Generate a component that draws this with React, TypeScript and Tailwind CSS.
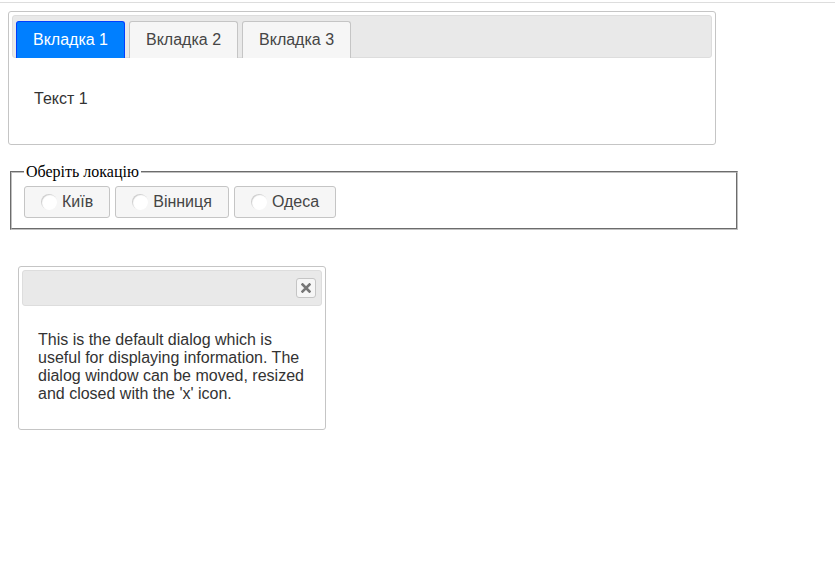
import { useState } from "react";

const tabs = ["Вкладка 1", "Вкладка 2", "Вкладка 3"];
const cities = ["Київ", "Вінниця", "Одеса"];

const App = () => {
  const [active, setActive] = useState(0);
  const [city, setCity] = useState<string | null>(null);

  return (
    <div className="min-h-screen bg-white font-['Liberation_Sans',Arial,sans-serif] text-[16px]">
      {/* thin rule at the very top */}
      <div className="mt-[2px] h-px bg-[#dddddd]"></div>

      {/* Tabs widget */}
      <div className="ml-[8px] mt-[8px] w-[708px] rounded-[3px] border border-[#c5c5c5] p-[3px]">
        <div className="flex h-[43px] items-end gap-[4px] rounded-[3px] border border-[#dddddd] bg-[#e9e9e9] pl-[3px] pr-[2px]">
          {tabs.map((t, i) => (
            <button
              key={t}
              onClick={() => setActive(i)}
              className={`mb-[-1px] h-[37px] rounded-t-[3px] border border-b-0 px-4 leading-none ${
                i === active
                  ? "border-[#003eff] bg-[#007fff] text-white"
                  : "border-[#c5c5c5] bg-[#f6f6f6] text-[#454545]"
              }`}
            >
              {t}
            </button>
          ))}
        </div>
        <div className="px-[22px] pb-[33px] pt-[32px] leading-[18px] text-[#333333]">
          Текст {active + 1}
        </div>
      </div>

      {/* Location radio group */}
      <fieldset className="ml-[10px] mt-[15px] w-[728px] border-2 border-[#c0c0c0] px-[12px] pb-[10px] pt-[2px] [border-style:groove]">
        <legend className="px-[2px] font-['Liberation_Serif','Times_New_Roman',serif] text-[16px] text-black">
          Оберіть локацію
        </legend>
        <div className="flex gap-[5px]">
          {cities.map((c) => (
            <label
              key={c}
              onClick={() => setCity(c)}
              className="flex h-[32px] cursor-pointer items-center gap-[5px] rounded-[3px] border border-[#c5c5c5] bg-[#f6f6f6] px-4 text-[#454545]"
            >
              <span className="flex h-4 w-4 items-center justify-center rounded-full bg-white shadow-[inset_1px_1px_1px_#cccccc]">
                {city === c && <span className="h-2 w-2 rounded-full bg-[#454545]"></span>}
              </span>
              {c}
            </label>
          ))}
        </div>
      </fieldset>

      {/* Dialog */}
      <div className="ml-[18px] mt-[36px] w-[308px] rounded-[3px] border border-[#c5c5c5] p-[3px]">
        <div className="flex h-[36px] items-center justify-end rounded-[3px] border border-[#dddddd] bg-[#e9e9e9] pr-[5px]">
          <button className="flex h-[20px] w-[20px] items-center justify-center rounded-[3px] border border-[#c5c5c5] bg-[#f6f6f6]">
            <svg width="10" height="10" viewBox="0 0 10 10">
              <path d="M1.5 1.5 L8.5 8.5 M8.5 1.5 L1.5 8.5" stroke="#777777" strokeWidth="2.6" strokeLinecap="square" />
            </svg>
          </button>
        </div>
        <div className="px-4 pb-[23px] pt-[25px] leading-[18px] text-[#333333]">
          This is the default dialog which is useful for displaying information. The dialog window can be moved, resized
          and closed with the 'x' icon.
        </div>
      </div>
    </div>
  );
};

export default App;
